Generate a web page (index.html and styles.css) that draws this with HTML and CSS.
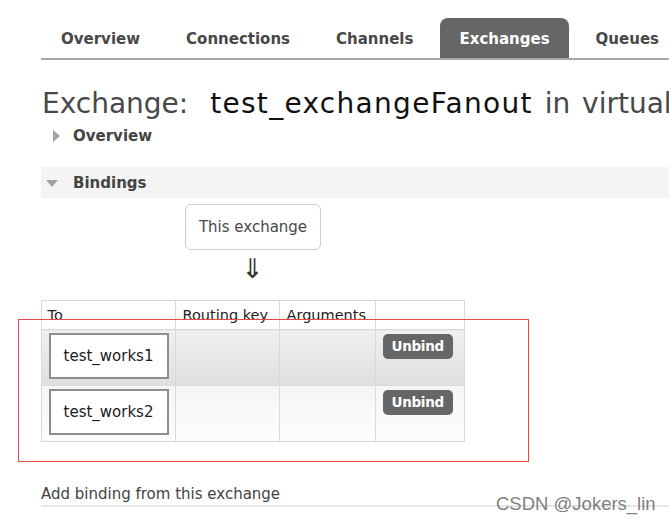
FILE: index.html
```html
<!DOCTYPE html>
<html>
<head>
<meta charset="utf-8">
<link rel="stylesheet" href="styles.css">
</head>
<body>
<div class="page">
  <nav class="tabs">
    <span class="tab">Overview</span>
    <span class="tab">Connections</span>
    <span class="tab">Channels</span>
    <span class="tab active">Exchanges</span>
    <span class="tab">Queues</span>
  </nav>
  <h1 class="title">Exchange: <b>test_exchangeFanout</b> in virtual host /</h1>
  <div class="section closed"><span class="tri-right"></span>Overview</div>
  <div class="section open"><span class="tri-down"></span>Bindings</div>
  <div class="bindings">
    <div class="this-ex">This exchange</div>
    <div class="arrow">⇓</div>
    <table class="btable">
      <colgroup><col class="c1"><col class="c2"><col class="c3"><col class="c4"></colgroup>
      <thead>
        <tr><th>To</th><th>Routing key</th><th>Arguments</th><th></th></tr>
      </thead>
      <tbody>
        <tr class="alt1">
          <td><div class="qbox">test_works1</div></td><td></td><td></td>
          <td><span class="btn">Unbind</span></td>
        </tr>
        <tr class="alt2">
          <td><div class="qbox">test_works2</div></td><td></td><td></td>
          <td><span class="btn">Unbind</span></td>
        </tr>
      </tbody>
    </table>
  </div>
  <div class="add">Add binding from this exchange</div>
</div>
<div class="redbox"></div>
<div class="watermark">CSDN @Jokers_lin</div>
</body>
</html>
```
FILE: styles.css
```css
html, body {
  margin: 0;
  padding: 0;
  background: #fff;
  overflow: hidden;
}
body {
  width: 669px;
  height: 523px;
  position: relative;
  font-family: "DejaVu Sans", Verdana, sans-serif;
  color: #444;
}
.page {
  padding-left: 41px;
  padding-top: 18px;
}
.tabs {
  display: flex;
  gap: 8px;
  height: 40px;
  padding-left: 1px;
  border-bottom: 2px solid #a6a6a6;
  white-space: nowrap;
}
.tab {
  padding: 3px 19px 0 19px;
  font-weight: bold;
  font-size: 15px;
  line-height: 37px;
  color: #484848;
  border-radius: 8px 8px 0 0;
}
.tab.active {
  background: #666;
  color: #fff;
}
.title {
  margin: 27px 0 0 1px;
  font-weight: normal;
  font-size: 28px;
  line-height: 34px;
  color: #484848;
  white-space: nowrap;
  word-spacing: 3px;
}
.title b {
  font-weight: normal;
  color: #111;
  letter-spacing: 1.3px;
  margin-left: 10px;
}
.section {
  font-weight: bold;
  font-size: 15px;
  color: #444;
  display: flex;
  align-items: center;
  padding-left: 32px;
  position: relative;
}
.closed {
  margin-top: 5px;
  height: 20px;
}
.open {
  margin-top: 21px;
  height: 31px;
  background: #f4f4f4;
}
.tri-right {
  position: absolute;
  left: 12px;
  top: 4px;
  width: 0;
  height: 0;
  border-top: 6px solid transparent;
  border-bottom: 6px solid transparent;
  border-left: 7px solid #a3a3a3;
}
.tri-down {
  position: absolute;
  left: 5px;
  top: 13px;
  width: 0;
  height: 0;
  border-left: 6px solid transparent;
  border-right: 6px solid transparent;
  border-top: 7px solid #a3a3a3;
}
.bindings {
  width: 423px;
  display: flex;
  flex-direction: column;
  align-items: center;
}
.this-ex {
  margin-top: 6px;
  margin-left: 1px;
  border: 1px solid #ccc;
  border-radius: 6px;
  padding: 13px 13px;
  font-size: 15px;
  line-height: 18px;
  color: #484848;
}
.arrow {
  height: 50px;
  font-size: 27px;
  line-height: 28px;
  padding-top: 5px;
  box-sizing: border-box;
  color: #333;
}
.btable {
  border-collapse: collapse;
  table-layout: fixed;
  width: 423px;
  font-size: 14.5px;
}
.c1 { width: 134px; }
.c2 { width: 104px; }
.c3 { width: 96px; }
.c4 { width: 89px; }
.btable th, .btable td {
  border: 1px solid #d9d9d9;
}
.btable th {
  height: 28px;
  padding: 0 6px;
  text-align: left;
  font-weight: normal;
  color: #222;
  background: #fff;
  white-space: nowrap;
}
.btable th:nth-child(2), .btable th:nth-child(3) {
  padding-left: 7px;
}
.btable td {
  padding: 3px 6px 6px 7px;
  vertical-align: top;
  height: 46px;
}
.alt1 td {
  background: linear-gradient(#f0f0f0, #dfdfdf);
}
.alt2 td {
  background: linear-gradient(#f5f5f5, #fdfdfd);
}
.qbox {
  width: 120px;
  height: 46px;
  box-sizing: border-box;
  border: 2px solid #8e8e8e;
  background: #fff;
  display: flex;
  align-items: center;
  justify-content: center;
  font-size: 15px;
  color: #1c1c1c;
}
.btn {
  display: inline-block;
  margin-top: 1px;
  height: 25px;
  line-height: 24px;
  padding: 0 9px;
  border-radius: 5px;
  background: #666;
  color: #fff;
  font-weight: bold;
  font-size: 13.5px;
  letter-spacing: -0.3px;
}
.add {
  margin-top: 42px;
  font-size: 15px;
  line-height: 20px;
  color: #444;
  padding-bottom: 1px;
  border-bottom: 2px solid #e6e6e6;
}
.redbox {
  position: absolute;
  left: 18px;
  top: 319px;
  width: 509px;
  height: 141px;
  border: 1px solid #e64848;
}
.watermark {
  position: absolute;
  left: 496px;
  top: 493px;
  font-family: "Liberation Sans", Arial, sans-serif;
  font-size: 18.5px;
  line-height: 22px;
  color: rgba(110, 110, 110, 0.9);
  white-space: nowrap;
}
```
